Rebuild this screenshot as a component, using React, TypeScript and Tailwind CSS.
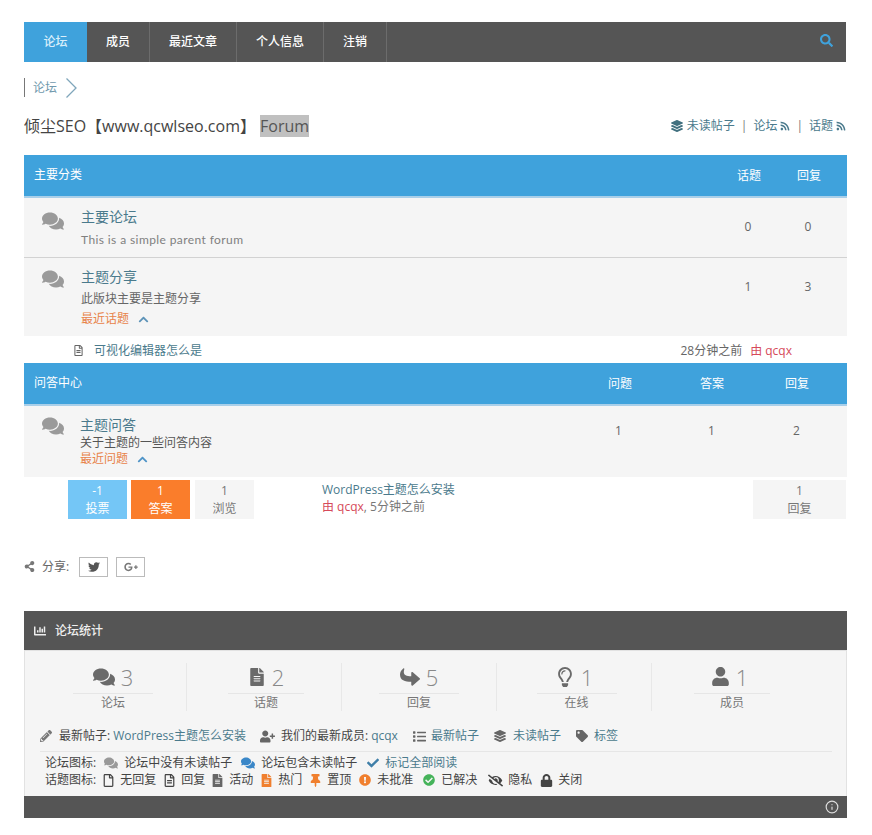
import React from "react";
import {
  FaSearch, FaLayerGroup, FaRss, FaComments, FaChevronUp, FaRegFileAlt, FaShareAlt, FaTwitter, FaGooglePlusG,
  FaChartBar, FaFileAlt, FaShare, FaRegLightbulb, FaUser, FaPencilAlt, FaUserPlus, FaList, FaTag, FaCheck,
  FaRegFile, FaThumbtack, FaExclamationCircle, FaCheckCircle, FaEyeSlash, FaLock,
} from "react-icons/fa";
import { FiInfo } from "react-icons/fi";

const link = "text-[#4a7a8c]";

function NavItem({ label, w, active }: { label: string; w: string; active?: boolean }) {
  return (
    <div className={`${w} flex h-full items-center justify-center text-[12px] font-medium ${active ? "bg-[#3fa2dc] text-[#d8eefb]" : "border-r border-[#6c6c6c] text-white"}`}>
      {label}
    </div>
  );
}

function BlueHeader({ title, cols }: { title: string; cols: React.ReactNode }) {
  return (
    <div className="flex h-[43px] w-[823px] items-center justify-between border-b-2 border-[#a9cfe9] bg-[#3fa2dc] pl-[10px] text-[12px] text-white">
      <span className="mb-[2px]">{title}</span>
      {cols}
    </div>
  );
}

function ForumIcon() {
  return <FaComments className="shrink-0 text-[22px] text-[#9a9a9a]" />;
}

function Stat({ icon, value, label, w, rule, row = "" }: { icon: React.ReactNode; value: string; label: string; w: string; rule: string; row?: string }) {
  return (
    <div className={`${w} flex h-[48px] flex-col items-center border-r border-[#e8e8e8] last:border-r-0`}>
      <div className={`${row} flex h-[31px] items-center gap-[6px] pb-[3px] text-[22px] font-light leading-none text-[#888]`}>
        <span className="text-[#6a6a6a]">{icon}</span>
        <span>{value}</span>
      </div>
      <div className={`${rule} border-t border-[#e6e6e6] pt-[1px] text-center text-[12px] leading-[16px] text-[#777]`}>{label}</div>
    </div>
  );
}

function TopicItem({ icon, text, cls }: { icon: React.ReactNode; text: string; cls: string }) {
  return (
    <span className={`${cls} flex items-center`}>
      {icon}
      {text}
    </span>
  );
}

export default function App() {
  return (
    <div className="min-h-[835px] bg-white pl-[24px] pt-[22px] text-[#555]" style={{ fontFamily: '"Open Sans","Noto Sans CJK SC",sans-serif' }}>
      <nav className="flex h-[40px] w-[822px] items-center bg-[#555555]">
        <NavItem label="论坛" w="w-[63px]" active />
        <NavItem label="成员" w="w-[63px]" />
        <NavItem label="最近文章" w="w-[87px]" />
        <NavItem label="个人信息" w="w-[87px]" />
        <NavItem label="注销" w="w-[63px]" />
        <FaSearch className="ml-auto mr-[13px] mb-[4px] text-[13px] text-[#3fa2dc]" />
      </nav>

      <div className="mt-[13px] flex h-[25px] items-center">
        <div className="h-[19px] w-px bg-[#777]" />
        <span className="ml-2 text-[12px] text-[#7199ad]">论坛</span>
        <svg width="13" height="22" viewBox="0 0 13 22" className="ml-2" fill="none" stroke="#7fa6bb" strokeWidth="1.3"><path d="M1.5 1.5 11 11 1.5 20.5" /></svg>
      </div>

      <div className="mt-[12px] flex h-[28px] w-[822px] items-center justify-between">
        <h1 className="text-[16px] font-normal text-[#444]">
          倾尘SEO【www.qcwlseo.com】 <span className="bg-[#c0c0c0] text-[#555]">Forum</span>
        </h1>
        <div className={`flex items-center text-[12px] ${link}`}>
          <FaLayerGroup className="mr-[4px] text-[12px] text-[#41707f]" />未读帖子
          <span className="mx-[6px] text-[#777]">|</span>论坛<FaRss className="ml-[3px] text-[10px]" />
          <span className="mx-[6px] text-[#777]">|</span>话题<FaRss className="ml-[3px] text-[10px]" />
        </div>
      </div>

      <div className="mt-[15px]">
        <BlueHeader
          title="主要分类"
          cols={
            <div className="mr-[8px] flex">
              <span className="w-[60px] text-center">话题</span>
              <span className="w-[60px] text-center">回复</span>
            </div>
          }
        />
        <div className="flex h-[60px] w-[823px] items-start border-b border-[#d2d2d2] bg-[#f5f5f5] pt-[10px]">
          <div className="ml-[18px] w-[39px] pt-[2px]"><ForumIcon /></div>
          <div className="flex-1">
            <div className={`text-[14px] leading-[18px] ${link}`}>主要论坛</div>
            <div className="mt-[5px] text-[12px] leading-[18px] text-[#808080]" style={{ fontFamily: 'Lato,"Noto Sans CJK SC",sans-serif', letterSpacing: "0.4px" }}>This is a simple parent forum</div>
          </div>
          <div className="mr-[9px] flex pt-[10px] text-[12px] text-[#666]">
            <span className="w-[60px] text-center">0</span>
            <span className="w-[60px] text-center">0</span>
          </div>
        </div>
        <div className="flex h-[78px] w-[823px] items-start bg-[#f5f5f5] pt-[10px]">
          <div className="ml-[18px] w-[39px]"><ForumIcon /></div>
          <div className="flex-1">
            <div className={`text-[14px] leading-[18px] ${link}`}>主题分享</div>
            <div className="mt-[4px] text-[12px] leading-[18px] text-[#666]">此版块主要是主题分享</div>
            <div className="mt-[2px] flex items-center text-[12px] leading-[18px] text-[#e8834a]">最近话题<FaChevronUp className="ml-[9px] text-[11px] text-[#5d93b8]" /></div>
          </div>
          <div className="mr-[9px] flex pt-[10px] text-[12px] text-[#666]">
            <span className="w-[60px] text-center">1</span>
            <span className="w-[60px] text-center">3</span>
          </div>
        </div>
        <div className="flex h-[27px] w-[823px] items-center pt-[2px] text-[12px]">
          <FaRegFileAlt className="ml-[49px] text-[11px] text-[#666]" />
          <span className={`ml-[10px] ${link}`}>可视化编辑器怎么是</span>
          <span className="ml-auto text-[#666]">28分钟之前</span>
          <span className="ml-[8px] mr-[55px] text-[#d64a5a]">由 qcqx</span>
        </div>
        <BlueHeader
          title="问答中心"
          cols={
            <div className="mr-[11px] flex">
              <span className="w-[92px] text-center">问题</span>
              <span className="w-[92px] text-center">答案</span>
              <span className="w-[78px] text-center">回复</span>
            </div>
          }
        />
        <div className="flex h-[71px] w-[823px] items-start bg-[#f5f5f5] pt-[10px]">
          <div className="-mt-[1px] ml-[18px] w-[38px]"><ForumIcon /></div>
          <div className="flex-1">
            <div className={`text-[14px] leading-[18px] ${link}`}>主题问答</div>
            <div className="mt-[1px] text-[12px] leading-[16px] text-[#555]">关于主题的一些问答内容</div>
            <div className="flex items-center text-[12px] leading-[16px] text-[#e8834a]">最近问题<FaChevronUp className="ml-[9px] text-[11px] text-[#4f94c8]" /></div>
          </div>
          <div className="mr-[12px] flex pt-[6px] text-[12px] text-[#666]">
            <span className="w-[93px] text-center">1</span>
            <span className="w-[93px] text-center">1</span>
            <span className="w-[77px] text-center">2</span>
          </div>
        </div>
        <div className="mt-[3px] flex h-[40px] w-[822px] text-[12px] leading-[18px]">
          <div className="ml-[44px] flex h-[39px] w-[59px] flex-col items-center justify-center bg-[#74c6f6] text-white"><span>-1</span><span>投票</span></div>
          <div className="ml-[4px] flex h-[39px] w-[59px] flex-col items-center justify-center bg-[#fa7d2b] text-white"><span>1</span><span>答案</span></div>
          <div className="ml-[5px] flex h-[39px] w-[59px] flex-col items-center justify-center bg-[#f5f5f5] text-[#777]"><span>1</span><span>浏览</span></div>
          <div className="ml-[68px] pt-[1px] text-[12px] leading-[17px]">
            <div className={link}>WordPress主题怎么安装</div>
            <div className="text-[#777]"><span className="text-[#d64a5a]">由 qcqx</span>, 5分钟之前</div>
          </div>
          <div className="ml-auto flex h-[39px] w-[93px] flex-col items-center justify-center bg-[#f5f5f5] text-[#777]"><span>1</span><span>回复</span></div>
        </div>
      </div>

      <div className="mt-[36px] flex h-[21px] items-center text-[12px] text-[#666]">
        <FaShareAlt className="text-[11px] text-[#777]" />
        <span className="ml-[7px]">分享:</span>
        <span className="ml-[10px] flex h-[20px] w-[29px] items-center justify-center border border-[#bbb] text-[#555]"><FaTwitter className="text-[12px]" /></span>
        <span className="ml-[8px] flex h-[20px] w-[29px] items-center justify-center border border-[#bbb] text-[#777]"><FaGooglePlusG className="text-[14px]" /></span>
      </div>

      <div className="mt-[34px] w-[823px]">
        <div className="flex h-[39px] items-center bg-[#555555] pl-[10px] text-[12px] font-medium text-[#eee]">
          <FaChartBar className="text-[12px]" />
          <span className="ml-[9px]">论坛统计</span>
        </div>
        <div className="h-[146px] border-x border-t border-[#e2e2e2] bg-[#f5f5f5] px-[15px] pt-[12px]">
          <div className="flex">
            <Stat icon={<FaComments className="text-[22px]" />} value="3" label="论坛" w="w-[147px]" rule="w-[80px]" />
            <Stat icon={<FaFileAlt className="text-[18px]" />} value="2" label="话题" w="w-[155px]" rule="ml-[4px] w-[76px]" row="pl-[4px]" />
            <Stat icon={<FaShare className="-scale-y-100 text-[20px]" />} value="5" label="回复" w="w-[155px]" rule="w-[80px]" />
            <Stat icon={<FaRegLightbulb className="text-[20px]" />} value="1" label="在线" w="w-[155px]" rule="ml-[5px] w-[80px]" />
            <Stat icon={<FaUser className="text-[19px]" />} value="1" label="成员" w="w-[155px]" rule="ml-[5px] w-[76px]" />
          </div>
          <div className="mt-[13px] flex h-[24px] items-center text-[12px] text-[#444]">
            <FaPencilAlt className="text-[12px] text-[#777]" />
            <span className="ml-[7px]">最新帖子:</span>
            <span className={`ml-[3px] ${link}`}>WordPress主题怎么安装</span>
            <FaUserPlus className="ml-[14px] text-[15px] text-[#666]" />
            <span className="ml-[6px]">我们的最新成员:</span>
            <span className={`ml-[3px] ${link}`}>qcqx</span>
            <FaList className="ml-[15px] text-[13px] text-[#666]" />
            <span className={`ml-[5px] ${link}`}>最新帖子</span>
            <FaLayerGroup className="ml-[15px] text-[12px] text-[#666]" />
            <span className={`ml-[7px] ${link}`}>未读帖子</span>
            <FaTag className="ml-[15px] text-[12px] text-[#666]" />
            <span className={`ml-[6px] ${link}`}>标签</span>
          </div>
          <div className="mt-[3px] w-[792px] border-t border-[#e6e6e6] pl-[5px] pt-[2px]">
            <div className="flex h-[17px] items-center text-[12px] text-[#444]">
              <span className="mr-2">论坛图标:</span>
              <span className="mr-[9px] flex items-center gap-[6px]"><FaComments className="text-[14px] text-[#999]" />论坛中没有未读帖子</span>
              <span className="mr-[10px] flex items-center gap-[6px]"><FaComments className="text-[14px] text-[#3a87c8]" />论坛包含未读帖子</span>
              <span className={`flex items-center gap-[6px] ${link}`}><FaCheck className="text-[12px] text-[#3f7fa8]" />标记全部阅读</span>
            </div>
            <div className="flex h-[18px] items-center text-[12px] text-[#444]">
              <span className="mr-[6px]">话题图标:</span>
              <TopicItem cls="gap-[5px]" icon={<FaRegFile className="text-[13px]" />} text="无回复" />
              <TopicItem cls="ml-[7px] gap-[5px]" icon={<FaRegFileAlt className="text-[13px]" />} text="回复" />
              <TopicItem cls="ml-[6px] gap-[5px]" icon={<FaFileAlt className="text-[13px] text-[#666]" />} text="活动" />
              <TopicItem cls="ml-[7px] gap-[5px]" icon={<FaFileAlt className="text-[13px] text-[#f07f2e]" />} text="热门" />
              <TopicItem cls="ml-[7px] gap-[5px]" icon={<FaThumbtack className="text-[13px] text-[#f07f2e]" />} text="置顶" />
              <TopicItem cls="ml-[8px] gap-[6px]" icon={<FaExclamationCircle className="text-[12px] text-[#f07f2e]" />} text="未批准" />
              <TopicItem cls="ml-[10px] gap-[6px]" icon={<FaCheckCircle className="text-[12px] text-[#45b35a]" />} text="已解决" />
              <TopicItem cls="ml-[11px] gap-[5px]" icon={<FaEyeSlash className="text-[15px]" />} text="隐私" />
              <TopicItem cls="ml-[8px] gap-[5px]" icon={<FaLock className="text-[13px]" />} text="关闭" />
            </div>
          </div>
        </div>
        <div className="flex h-[22px] items-center justify-end bg-[#555555] pr-[8px]">
          <FiInfo className="text-[14px] text-[#ddd]" />
        </div>
      </div>
    </div>
  );
}
